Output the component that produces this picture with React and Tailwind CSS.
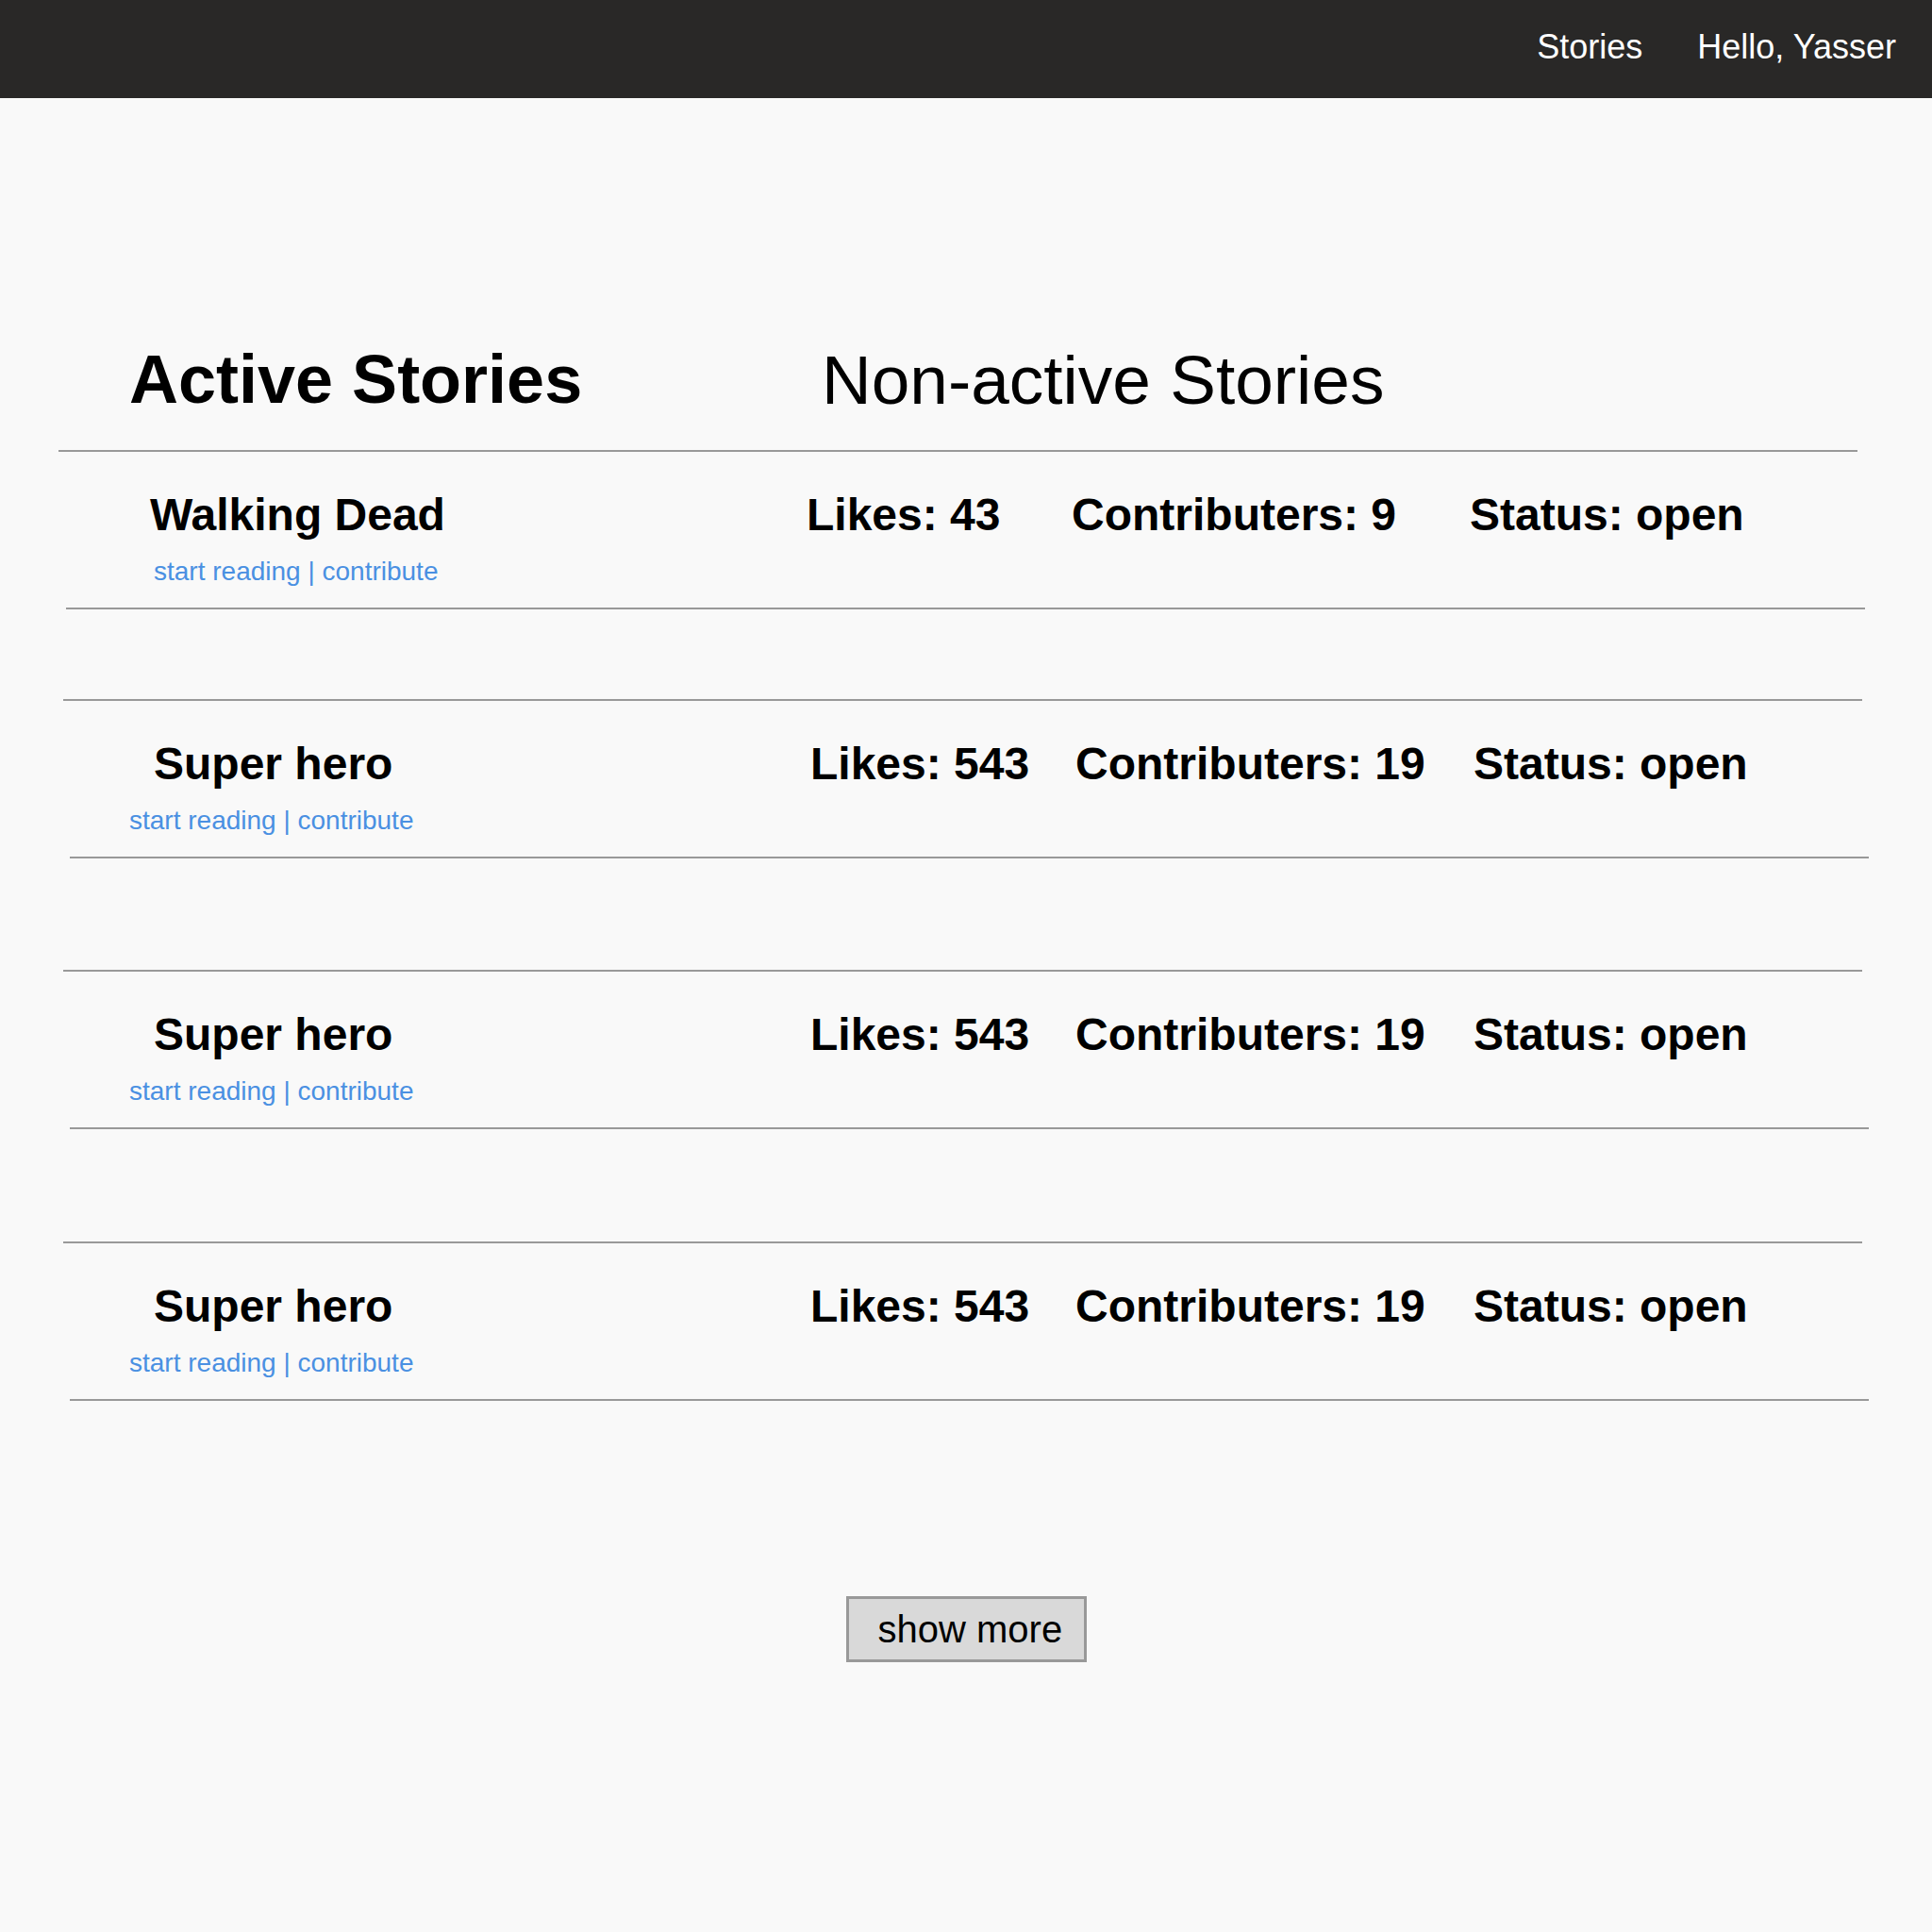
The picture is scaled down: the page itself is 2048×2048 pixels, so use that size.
const stories = [
  { title: 'Walking Dead', likes: 43, contributers: 9, status: 'open', top: 'ml-[62px]', bottom: 'ml-[70px]', pad: 'pl-[97px]', links: 'pl-[101px]', gapAfter: 'h-[95px]' },
  { title: 'Super hero', likes: 543, contributers: 19, status: 'open', top: 'ml-[67px]', bottom: 'ml-[74px]', pad: 'pl-[96px]', links: 'pl-[70px]', gapAfter: 'h-[118px]' },
  { title: 'Super hero', likes: 543, contributers: 19, status: 'open', top: 'ml-[67px]', bottom: 'ml-[74px]', pad: 'pl-[96px]', links: 'pl-[70px]', gapAfter: 'h-[119px]' },
  { title: 'Super hero', likes: 543, contributers: 19, status: 'open', top: 'ml-[67px]', bottom: 'ml-[74px]', pad: 'pl-[96px]', links: 'pl-[70px]', gapAfter: '' },
]

function StoryRow({ s }) {
  return (
    <div>
      <div className={`h-[2px] w-[1907px] bg-[#999] ${s.top}`} />
      <div className={`${s.top} w-[1907px]`}>
        <div className={`flex items-start pt-[43px] ${s.pad}`}>
          <h2 className="w-[696px] text-[48px] leading-none font-bold">{s.title}</h2>
          <span className="w-[281px] text-[48px] leading-none font-bold">Likes: {s.likes}</span>
          <span className="w-[422px] text-[48px] leading-none font-bold">Contributers: {s.contributers}</span>
          <span className="text-[48px] leading-none font-bold">Status: {s.status}</span>
        </div>
        <div className={`pt-[22px] text-[28px] leading-none text-[#4a90e2] ${s.links}`}>
          <a href="#" className="text-[#4a90e2]">start reading</a> | <a href="#" className="text-[#4a90e2]">contribute</a>
        </div>
      </div>
      <div className="h-[24px]" />
      <div className={`h-[2px] w-[1907px] bg-[#999] ${s.bottom}`} />
      {s.gapAfter && <div className={s.gapAfter} />}
    </div>
  )
}

export default function App() {
  return (
    <div className="min-h-[2048px] bg-[#f9f9f9] text-black font-['Liberation_Sans',Arial,sans-serif]">
      <header className="h-[104px] bg-[#292827] flex items-center justify-end pr-[38px] pb-[5px] gap-[58px] text-white text-[36px]">
        <a href="#">Stories</a>
        <span>Hello, Yasser</span>
      </header>

      <div className="flex items-start pt-[262px] pl-[137px] pb-[38px]">
        <h1 className="w-[734px] text-[72px] leading-none font-bold">Active Stories</h1>
        <h1 className="text-[73px] leading-none font-normal">Non-active Stories</h1>
      </div>

      {stories.map((s, i) => <StoryRow key={i} s={s} />)}

      <div className="flex justify-center pt-[207px]">
        <button className="w-[255px] h-[70px] bg-[#d9d9d9] border-[3px] border-[#999] text-[40px] leading-none pl-[31px] text-left">
          show more
        </button>
      </div>
    </div>
  )
}
